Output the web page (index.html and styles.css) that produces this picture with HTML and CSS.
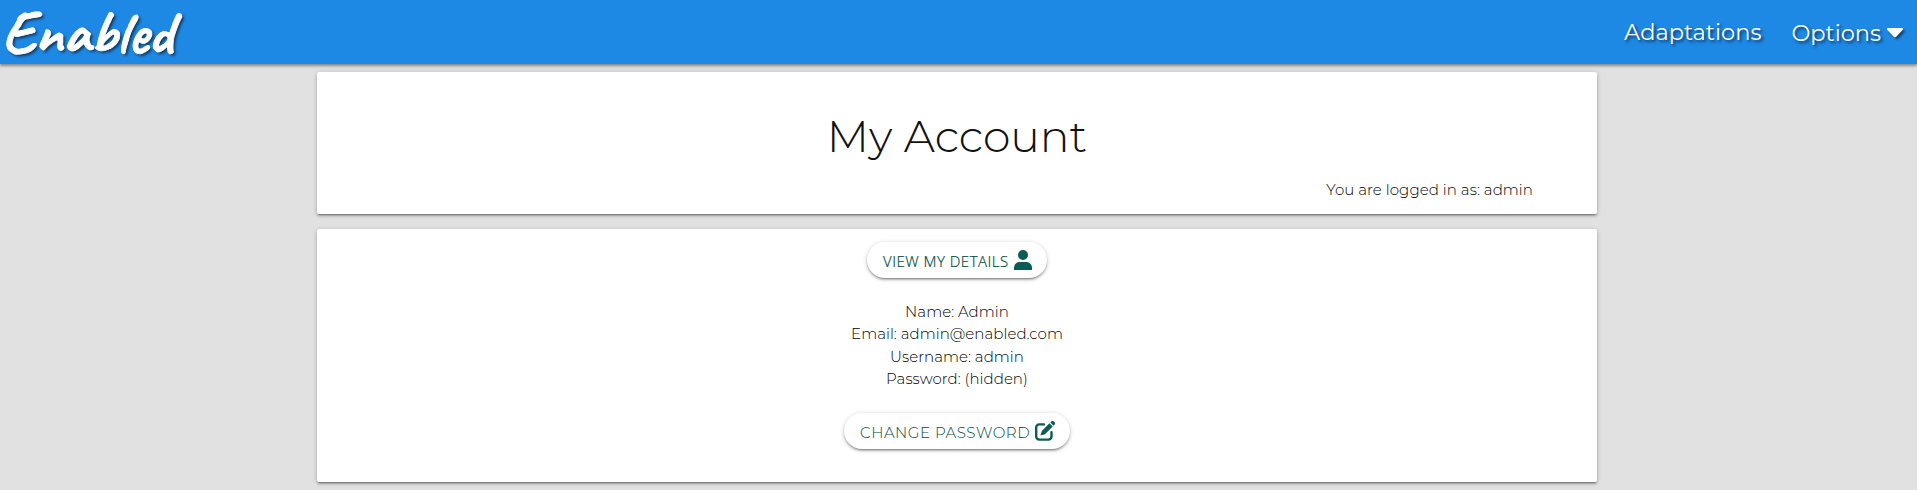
FILE: index.html
```html
<!DOCTYPE html>
<html lang="en">
<head>
<meta charset="utf-8">
<title>My Account</title>
<link rel="stylesheet" href="styles.css">
</head>
<body>
<nav class="navbar">
  <a class="logo">Enabled</a>
  <div class="links">
    <a class="link adaptations">Adaptations</a>
    <a class="link options"><span>Options</span><svg class="caret" viewBox="0 0 16 10"><path d="M1.2 0h13.6c1.1 0 1.6 1.2.8 2L9 8.9c-.6.6-1.4.6-2 0L.4 2C-.4 1.2.1 0 1.2 0z"/></svg></a>
  </div>
</nav>
<main class="container">
  <section class="panel heading">
    <h1 class="title">My Account</h1>
    <p class="status">You are logged in as: admin</p>
  </section>
  <section class="panel account">
    <button class="btn details"><span class="label">VIEW MY DETAILS</span><svg class="user" viewBox="0 0 18 20"><circle cx="9" cy="5" r="5"/><path d="M0 20v-2c0-3.500 2.500-6 6-6h6c3.500 0 6 2.500 6 6v2z"/></svg></button>
    <div class="info">
      <p class="name">Name: Admin</p>
      <p class="email">Email: admin@enabled.com</p>
      <p class="username">Username: admin</p>
      <p class="password">Password: (hidden)</p>
    </div>
    <button class="btn change"><span class="label">CHANGE PASSWORD</span><svg class="edit" viewBox="0 0 20 20"><path class="box" d="M9 3.400H4.200A3 3 0 0 0 1.200 6.400v9.200a3 3 0 0 0 3 3h9.300a3 3 0 0 0 3-3v-4.300"/><path d="M14.400 2.300l3.300 3.300-7.200 7.200q-.4.400-1 .6l-4 1.200 1.200-4.200q.2-.6.600-1zM15.300 1.400l.9-.8a1.900 1.900 0 0 1 2.700 0l.5.500a1.900 1.900 0 0 1 0 2.700l-.8.9z"/></svg></button>
  </section>
</main>
</body>
</html>
```
FILE: styles.css
```css
body { margin: 0; background: #e1e1e1; color: rgba(0,0,0,.87); font: 300 15px/22.5px Montserrat, Inter, sans-serif; }
h1, p { margin: 0; font-weight: 300; }
.navbar { height: 64px; background: #1e88e5; display: flex; justify-content: space-between; color: #fff; box-sizing: border-box; padding: 0 14px 0 0; text-shadow: 2px 2px 3px rgba(0,0,0,.6); box-shadow: 0 2px 2px rgba(0,0,0,.28), 0 1px 5px rgba(0,0,0,.2); }
.logo { font: 700 61px/64px Caveat, Lato, sans-serif; padding: 0 2px; -webkit-text-stroke: .8px #fff; }
.links { display: flex; gap: 30px; font-size: 22.500px; font-weight: 400; line-height: 64px; }
.link { white-space: nowrap; }
.options { display: flex; align-items: center; gap: 6px; padding-top: 2px; height: 64px; box-sizing: border-box; }
.caret { width: 16px; height: 10px; fill: #fff; filter: drop-shadow(2px 2px 1px rgba(0,0,0,.5)); }
.container { width: 1280px; margin: 8px 0 0 317px; padding-bottom: 8px; }
.panel { background: #fff; border-radius: 2px; box-sizing: border-box; box-shadow: 0 2px 2px rgba(0,0,0,.2), 0 3px 1px -2px rgba(0,0,0,.2), 0 1px 5px rgba(0,0,0,.2); }
.heading { height: 142px; padding-top: 39px; text-align: center; }
.title { font-size: 44.200px; line-height: 50px; color: #111; }
.status { text-align: right; padding: 18px 64px 0 0; color: #000; letter-spacing: .06px; }
.account { height: 253px; margin-top: 15px; padding-top: 13px; display: flex; flex-direction: column; align-items: center; }
.btn { height: 36px; border: 0; border-radius: 18px; padding: 0 15px 0 16px; background: #fff; color: #004d40; display: flex; align-items: center; justify-content: space-between; box-sizing: border-box; font: 300 15px/36px Montserrat, Inter, sans-serif; letter-spacing: .5px; box-shadow: 0 2px 2px rgba(0,0,0,.2), 0 3px 1px -2px rgba(0,0,0,.2), 0 1px 5px rgba(0,0,0,.2); white-space: nowrap; }
.details { width: 180px; font-family: "Open Sans", sans-serif; -webkit-text-stroke: .2px #004d40; }
.change { width: 226px; letter-spacing: .55px; }
.label { padding-top: 2px; }
.change .label { padding-top: 3px; }
.user { width: 18px; height: 20px; fill: #0b5c52; }
.edit { width: 20px; height: 20px; fill: #0b5c52; }
.box { fill: none; stroke: #0b5c52; stroke-width: 2.400; stroke-linecap: round; }
.info { text-align: center; margin: 22.500px 0 22.500px; height: 90px; color: #000; letter-spacing: .04px; }
```
